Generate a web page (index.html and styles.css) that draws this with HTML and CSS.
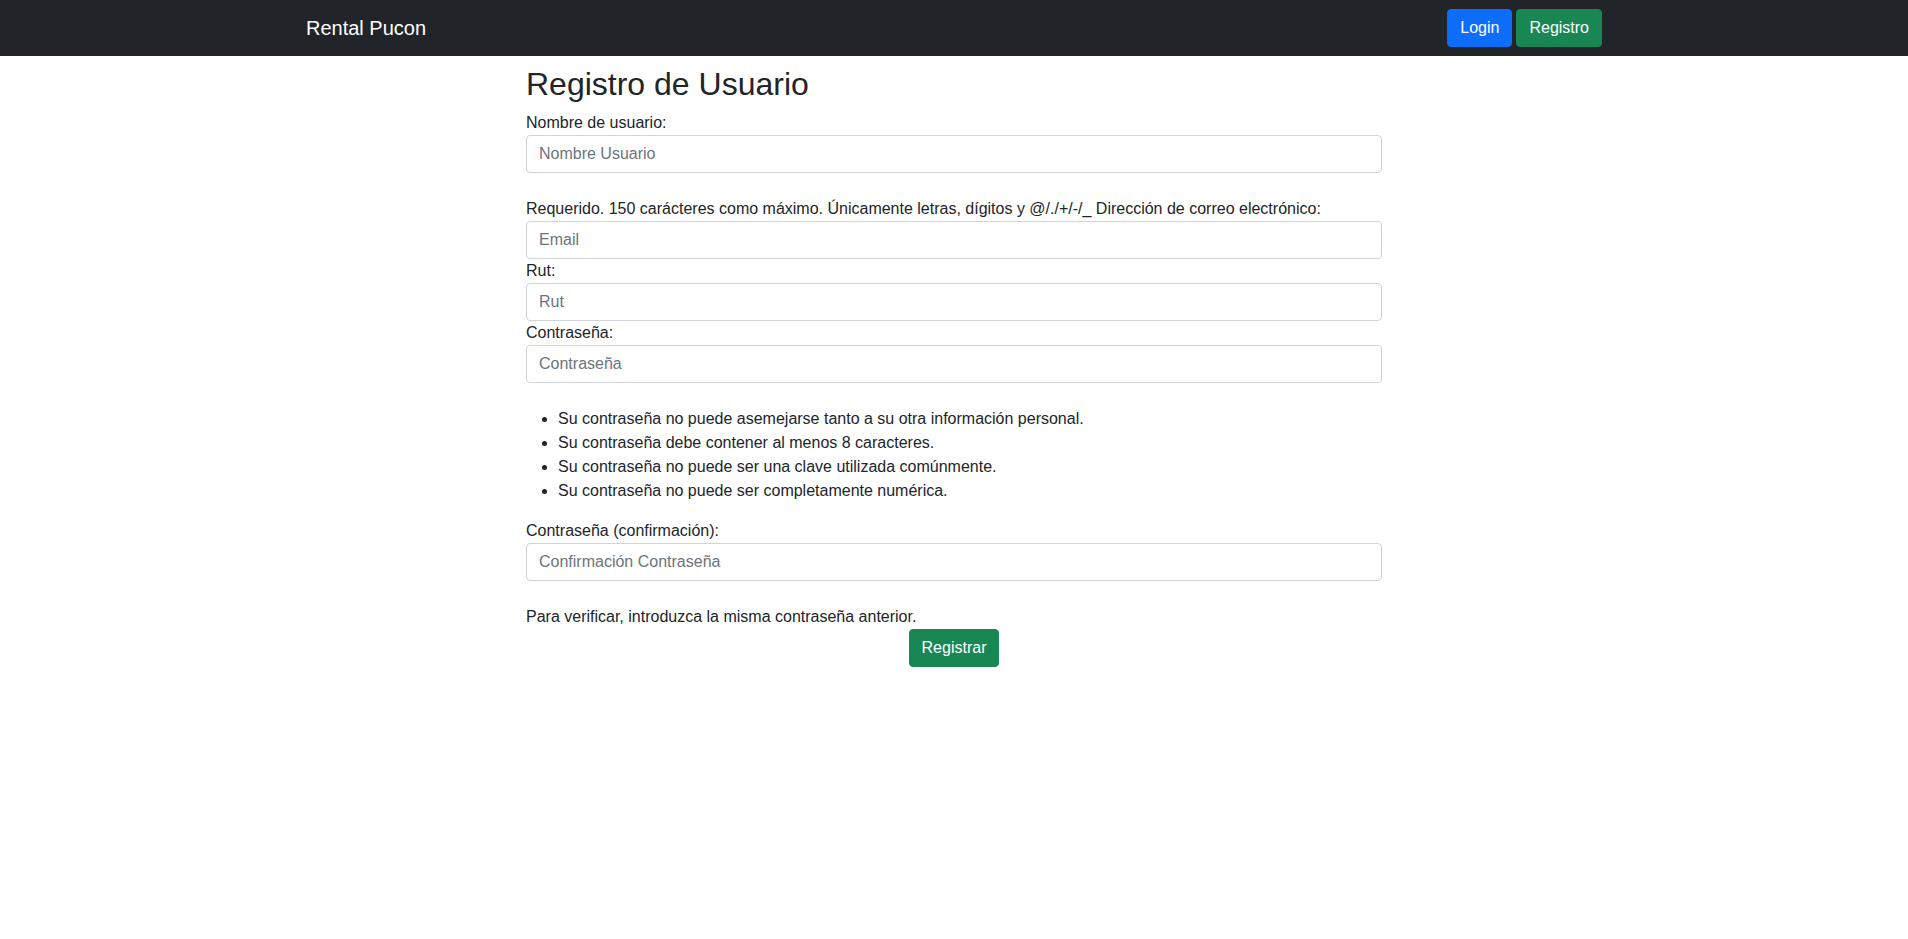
FILE: index.html
```html
<!DOCTYPE html>
<html lang="es">
<head>
<meta charset="utf-8">
<title>Registro de Usuario</title>
<link rel="stylesheet" href="styles.css">
</head>
<body>
<nav class="navbar">
  <div class="nav-container">
    <a class="brand" href="#">Rental Pucon</a>
    <div class="nav-actions">
      <a class="btn btn-primary" href="#">Login</a>
      <a class="btn btn-success" href="#">Registro</a>
    </div>
  </div>
</nav>
<main class="page">
  <h2 class="title">Registro de Usuario</h2>
  <form class="form">
    <label class="label">Nombre de usuario:</label>
    <input class="input" type="text" placeholder="Nombre Usuario">
    <div class="gap"></div>
    <div class="help">Requerido. 150 carácteres como máximo. Únicamente letras, dígitos y @/./+/-/_ <label>Dirección de correo electrónico:</label></div>
    <input class="input" type="email" placeholder="Email">
    <label class="label">Rut:</label>
    <input class="input" type="text" placeholder="Rut">
    <label class="label">Contraseña:</label>
    <input class="input" type="password" placeholder="Contraseña">
    <div class="gap"></div>
    <ul class="rules">
      <li>Su contraseña no puede asemejarse tanto a su otra información personal.</li>
      <li>Su contraseña debe contener al menos 8 caracteres.</li>
      <li>Su contraseña no puede ser una clave utilizada comúnmente.</li>
      <li>Su contraseña no puede ser completamente numérica.</li>
    </ul>
    <label class="label">Contraseña (confirmación):</label>
    <input class="input" type="password" placeholder="Confirmación Contraseña">
    <div class="gap"></div>
    <div class="help">Para verificar, introduzca la misma contraseña anterior.</div>
    <div class="submit-row">
      <button class="btn btn-success" type="button">Registrar</button>
    </div>
  </form>
</main>
</body>
</html>
```

FILE: styles.css
```css
* { box-sizing: border-box; }
body {
  margin: 0;
  font-family: "Liberation Sans", Arial, sans-serif;
  font-size: 16px;
  line-height: 1.5;
  color: #212529;
  background: #fff;
}
.navbar {
  background: #212529;
  height: 56px;
  display: flex;
  align-items: center;
}
.nav-container {
  width: 100%;
  max-width: 1320px;
  margin: 0 auto;
  padding: 0 12px;
  display: flex;
  align-items: center;
  justify-content: space-between;
}
.brand {
  color: #fff;
  font-size: 20px;
  text-decoration: none;
  line-height: 30px;
}
.nav-actions {
  display: flex;
  gap: 4px;
}
.btn {
  display: inline-block;
  font-family: inherit;
  font-size: 16px;
  line-height: 24px;
  padding: 6px 12px;
  border: 1px solid transparent;
  border-radius: 4px;
  color: #fff;
  text-decoration: none;
  cursor: pointer;
}
.btn-primary { background: #0d6efd; border-color: #0d6efd; }
.btn-success { background: #198754; border-color: #198754; }
.page {
  width: 856px;
  margin: 0 auto;
  padding-top: 9px;
}
.title {
  font-size: 32px;
  font-weight: 400;
  line-height: 1.2;
  margin: 0 0 8px;
}
.form { display: flex; flex-direction: column; }
.label, .help { display: block; line-height: 24px; }
.input {
  display: block;
  width: 100%;
  height: 38px;
  padding: 6px 12px;
  font-family: inherit;
  font-size: 16px;
  line-height: 24px;
  color: #212529;
  border: 1px solid #ced4da;
  border-radius: 4px;
  background: #fff;
}
.input::placeholder { color: #6c757d; opacity: 1; }
.gap { height: 24px; }
.rules {
  margin: 0 0 16px;
  padding-left: 32px;
}
.rules li { line-height: 24px; }
.submit-row {
  display: flex;
  justify-content: center;
}
```
